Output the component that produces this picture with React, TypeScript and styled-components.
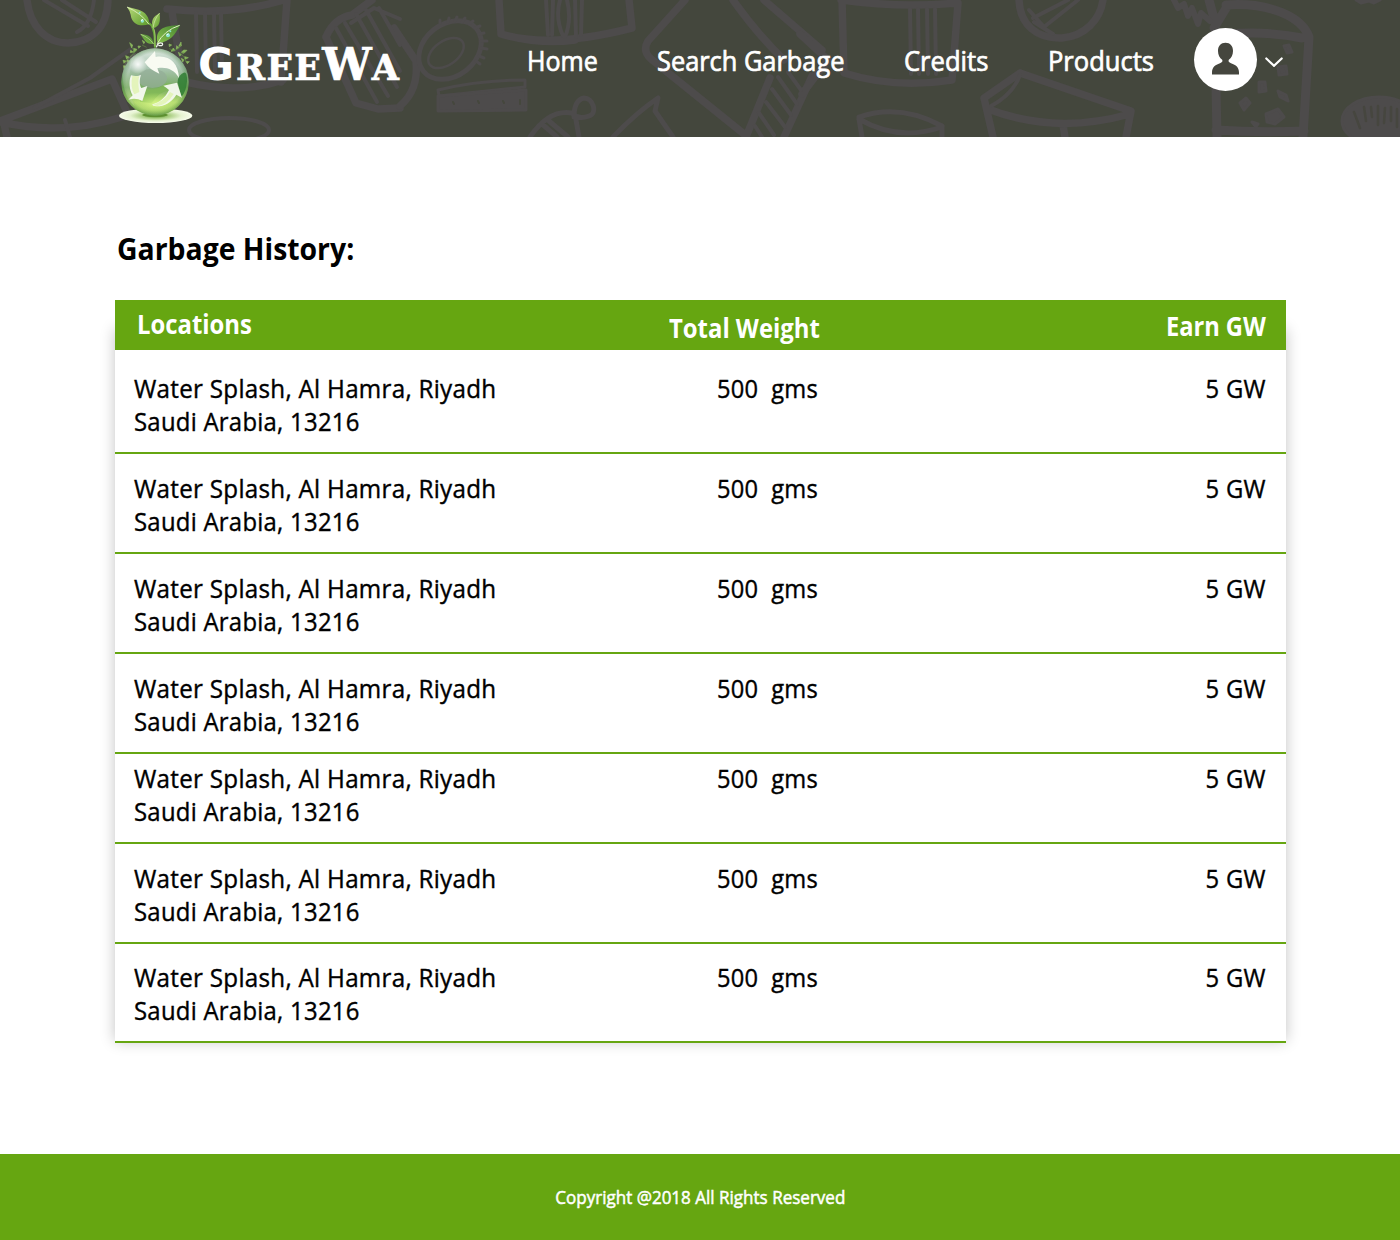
import React from 'react';
import styled, { createGlobalStyle } from 'styled-components';

const GREEN = '#66a611';

const GlobalStyle = createGlobalStyle`
  *, *::before, *::after { box-sizing: border-box; }
  body { margin: 0; background: #fff; color: #000; font-family: 'Open Sans', 'Noto Sans', sans-serif; }
`;

const Page = styled.div`
  width: 1400px;
  height: 1240px;
  display: flex;
  flex-direction: column;
  overflow: hidden;
`;

/* Text set slightly narrower than the family's own width. */
const Label = styled.span<{ $scale: number; $weight?: number; $origin?: string; $stroke?: number }>`
  display: inline-block;
  white-space: pre;
  font-weight: ${p => p.$weight ?? 400};
  transform: scaleX(${p => p.$scale});
  transform-origin: ${p => p.$origin ?? 'left'} center;
  -webkit-text-stroke: ${p => p.$stroke ?? 0}px currentColor;
`;

const Header = styled.header`
  position: relative;
  flex: none;
  height: 137px;
  display: flex;
  align-items: flex-start;
  background: #44473d;
  color: #fff;
`;

const Backdrop = styled.svg`
  position: absolute;
  inset: 0;
`;

const Brand = styled.a`
  position: relative;
  display: flex;
  width: 416.7px;
  margin-left: 110px;
`;

const BrandIcon = styled.svg`
  flex: none;
  width: 100px;
  height: 137px;
`;

const BrandName = styled.span`
  display: flex;
  align-items: baseline;
  height: 60px;
  margin: 39px 0 0 -12px;
  font: 700 44px/52px 'DejaVu Serif', serif;
  -webkit-text-stroke: 0.7px #fff;
`;

const RoundCap = styled.span`
  display: inline-block;
  width: 38px;
  font-family: 'DejaVu Sans', sans-serif;
  -webkit-text-stroke: 0;
`;

const SmallCaps = styled.span`
  font-size: 35px;
  letter-spacing: 1.3px;
`;

const Nav = styled.nav`
  position: relative;
  display: grid;
  grid-template-columns: 130.8px 247px 143.8px 146.2px;
  padding-top: 43px;
  font-size: 26.5px;
  line-height: 36px;
`;

const Account = styled.button`
  position: relative;
  display: flex;
  align-items: center;
  gap: 8px;
  height: 63px;
  margin-top: 28px;
  padding: 0;
  border: 0;
  background: none;
`;

const Avatar = styled.span`
  display: block;
  width: 63px;
  height: 63px;
  border-radius: 50%;
  background: #fff;
`;

const Main = styled.main`
  flex: 1;
  padding: 84px 114px 0 115px;
`;

const Title = styled.h1`
  margin: 0;
  padding: 3px 0 0 1.5px;
  height: 79px;
  font-size: 31px;
  line-height: 48px;
`;

const Table = styled.section`
  position: relative;
  &::before {
    content: '';
    position: absolute;
    inset: 29px 0 2px;
    box-shadow: 0 0 14px rgba(0, 0, 0, 0.24);
  }
`;

const TableHead = styled.div`
  position: relative;
  display: grid;
  grid-template-columns: 532px 1fr auto;
  height: 50px;
  padding: 0 20px 0 21.5px;
  background: ${GREEN};
  color: #fff;
  font-size: 26px;
  line-height: 34px;
`;

const HeadCell = styled.div<{ $top: number }>`
  padding-top: ${p => p.$top}px;
`;

const Row = styled.div<{ $height: number }>`
  position: relative;
  display: grid;
  grid-template-columns: 583px 1fr auto;
  align-content: end;
  height: ${p => p.$height}px;
  padding: 0 20px 14px 19px;
  border-bottom: 2px solid ${GREEN};
  background: #fff;
  font-size: 26px;
  line-height: 33px;
  letter-spacing: 0.3px;
`;

const Address = styled.div`
  display: flex;
  flex-direction: column;
  align-items: flex-start;
`;

const Footer = styled.footer`
  flex: none;
  display: flex;
  justify-content: center;
  height: 86px;
  padding-top: 31px;
  background: ${GREEN};
  color: #fff;
  font-size: 18px;
  line-height: 25px;
`;

const navItems = [
  { text: 'Home', scale: 0.945 },
  { text: 'Search Garbage', scale: 0.957 },
  { text: 'Credits', scale: 0.966 },
  { text: 'Products', scale: 0.964 },
];

const rowHeights = [104, 100, 100, 100, 90, 100, 99];

const vlines = (xs: number[], y1: number, y2: number) =>
  xs.map(x => `M${x},${y1}L${x + 1},${y2}`).join('');

function Doodles() {
  return (
    <Backdrop width="1400" height="137" viewBox="0 0 1400 137" fill="none" stroke="#4d4b4b" strokeLinecap="round" strokeLinejoin="round" aria-hidden>
      <g strokeWidth="7.5">
        <path d="M27,0C30,26 46,43 68,43C92,42 107,28 108,0" />
        <path d="M167,9Q230,16 284,0M172,12L184,84M287,0L281,82M186,82Q240,95 283,80" />
        <path d="M0,121L112,79L126,110M0,122Q62,136 122,117M4,124L7,137" />
        <path d="M326,37Q334,18 352,15M352,15L372,0M326,37L356,103L378,109L400,108" />
        <path d="M394,28L416,61Q419,90 400,106" />
        <path d="M499,0L501,34Q550,49 632,28L629,0M501,34Q540,45 575,40" />
        <path d="M685,0L648,41Q642,51 651,59L744,134M733,0Q758,35 784,60M764,0L822,50M770,78L746,137M812,76L784,137" />
        <path d="M800,34L828,60L802,94M842,0L844,73Q895,89 952,80L958,3Q900,8 841,0" />
        <path d="M1019,0C1020,25 1037,39 1062,38C1085,36 1100,20 1103,0" />
        <path d="M1020,73L1131,111L1126,137M1020,73L984,98L993,137M988,109Q1055,135 1130,114M1063,125L1065,137" />
      </g>
      <g strokeWidth="4">
        <path d="M44,0L88,26M62,0L96,22M94,0Q91,25 77,32M131,49L90,78L34,108M65,120L70,137" />
        <path d={vlines([196, 205, 214, 221], 13, 72)} />
        <ellipse cx="229" cy="130" rx="40" ry="12" />
        <path d="M336,28L377,102M345,23L388,96M356,14L397,87M366,10L400,71M379,8L400,45M351,23L374,8L400,19" />
        <path d="M530,137Q549,109 572,113M542,124L557,137M549,121L568,137M574,117Q574,100 584,98C593,98 598,113 589,116Q578,120 572,113M576,120L579,137M613,137Q636,113 658,98L655,111L673,137" strokeWidth="5" />
        <path d="M788,72L801,90M778,77L797,104M772,89L791,115M766,102L785,127M759,113L774,135M755,126L762,137" />
        <path d={vlines([910, 918, 927, 935], 9, 74)} />
        <path d="M859,117Q900,103 942,126M859,119Q898,142 942,127M859,119L862,137M942,127L942,137" strokeWidth="5" />
        <path d="M1033,18L1068,0M1029,10L1044,27L1078,0M1034,22L1053,34M1020,75Q1013,94 991,106" />
      </g>
      <ellipse cx="450" cy="50" rx="34" ry="26" transform="rotate(-38 450 50)" strokeWidth="5" />
      <ellipse cx="446" cy="53" rx="20" ry="12" transform="rotate(-35 446 53)" strokeWidth="2.5" />
      <path d="M440,23l0,-3M448,22l1,-4M455,21l2,-4M462,22l3,-4M469,24l4,-3M475,28l5,-2M479,34l5,-1M481,41l6,0M481,48l6,1M479,56l5,2M476,61l4,3" strokeWidth="3" />
      <path d="M438,90Q480,80 525,80L525,87L439,96Z" strokeWidth="3" />
      <path d="M438,96L526,90L526,110L438,111Z" fill="#4d4b4b" strokeWidth="3" />
      <path d="M453,102l1,2M478,101l1,2M503,101l1,2M520,100v4" stroke="#45473d" strokeWidth="2" />
      <path d="M546,0L548,35M553,0L552,35M560,0Q555,18 563,36M567,0Q572,20 565,37M575,0L576,37M582,0L581,35" strokeWidth="4" />
      <path d="M1226,5C1270,2 1302,17 1309,37L1303,137M1209,0L1215,22M1228,34Q1268,31 1302,38M1228,5L1214,28M1216,86L1217,137M1216,130Q1260,133 1304,131" strokeWidth="9" />
      <path d="M1174,0L1178,8L1184,4L1188,16L1192,8L1198,24L1201,13L1210,21" strokeWidth="6" />
      <g fill="#4d4b4b" strokeWidth="3">
        <path d="M1284,46l5,-1l3,7l-5,1ZM1278,67l8,-1l1,8l-8,1ZM1259,82l6,0l1,9l-7,1ZM1278,91l8,4l2,6l-8,-4ZM1240,103l6,-5l4,5l-6,7ZM1266,114l12,-5l6,8l-9,7l-8,-2ZM1252,122l6,2l-2,3Z" />
        <ellipse cx="1379" cy="121" rx="37" ry="24" />
        <path d="M1356,0l5,3l8,-2l5,2l6,-3Z" />
      </g>
      <path d="M1354,112L1360,128M1364,107l2,14M1371,107l1,10M1378,106l0,19M1385,108l-1,15M1391,107v14M1397,109v18" stroke="#46463f" strokeWidth="2.5" />
    </Backdrop>
  );
}

/* Drawn on a 3x grid, so one unit is a third of a pixel. */
function LogoMark() {
  return (
    <BrandIcon viewBox="0 0 300 411" aria-hidden>
      <defs>
        <linearGradient id="ball" x1="0" y1="0" x2="0" y2="1">
          <stop offset="0" stopColor="#dde9e0" />
          <stop offset="0.3" stopColor="#a9c4b0" />
          <stop offset="0.58" stopColor="#78ab62" />
          <stop offset="0.8" stopColor="#b4da74" />
          <stop offset="1" stopColor="#8ab860" />
        </linearGradient>
        <radialGradient id="shade" cx="0.5" cy="0.5" r="0.5">
          <stop offset="0.85" stopColor="#2f7026" stopOpacity="0" />
          <stop offset="1" stopColor="#2f7026" stopOpacity="0.4" />
        </radialGradient>
        <radialGradient id="glow">
          <stop offset="0" stopColor="#fff" stopOpacity="0.9" />
          <stop offset="1" stopColor="#fff" stopOpacity="0" />
        </radialGradient>
        <radialGradient id="lime">
          <stop offset="0" stopColor="#dcf88b" stopOpacity="0.9" />
          <stop offset="1" stopColor="#c5ee6a" stopOpacity="0" />
        </radialGradient>
        <radialGradient id="base">
          <stop offset="0" stopColor="#4c8a24" />
          <stop offset="0.35" stopColor="#a5cb7b" />
          <stop offset="0.7" stopColor="#e6f3d1" />
          <stop offset="1" stopColor="#f7fcec" />
        </radialGradient>
        <linearGradient id="leaf" x1="0" y1="0" x2="1" y2="1">
          <stop offset="0" stopColor="#b8d97a" />
          <stop offset="1" stopColor="#5c9b2b" />
        </linearGradient>
        <linearGradient id="darkLeaf" x1="1" y1="0" x2="0" y2="1">
          <stop offset="0" stopColor="#458331" />
          <stop offset="1" stopColor="#8ac24d" />
        </linearGradient>
      </defs>
      <ellipse cx="137" cy="347" rx="110" ry="22" fill="url(#base)" />
      <ellipse cx="135" cy="345" rx="38" ry="6" fill="#5d8f30" />
      <g fill="#8ab65d" stroke="#8ab65d" strokeWidth="2">
        <path d="M59,128l9,7l-3,9ZM71,145l10,3l-10,10ZM62,151l7,5l-8,2ZM47,167l10,4l-7,6ZM39,181l10,2l-7,7ZM52,180l6,2l-5,5ZM97,121l8,6l-4,4ZM84,138l8,1l-6,6ZM213,126l1,12l-8,1ZM190,144l5,8l-12,2ZM221,150l10,1l-9,9l-8,-3ZM205,157l9,7l-5,4ZM224,170l11,3l-10,5ZM228,184l10,1l-6,6ZM214,175l8,5l-4,6ZM177,132l8,3l-7,5ZM200,137l6,6l-7,4ZM40,197l8,1l-6,8Z" />
      </g>
      <path d="M48,183L55,175L73,157L82,150M67,143L73,154M96,135L110,142M178,146L192,152L207,145L212,135M207,157L221,169L229,186M215,160L223,158" fill="none" stroke="#628c43" strokeWidth="2" />
      <circle cx="135" cy="246" r="101" fill="url(#ball)" />
      <circle cx="135" cy="246" r="101" fill="url(#shade)" />
      <path d="M38,220Q42,172 78,158Q55,205 60,240Q55,280 75,320Q38,290 38,220Z" fill="#fff" opacity="0.14" />
      <path d="M203,247C203,229 214,221 221,218Q232,214 231,245Q229,274 214,291Z" fill="#2f7c32" opacity="0.85" />
      <ellipse cx="127" cy="235" rx="44" ry="29" fill="#94ad98" opacity="0.75" />
      <path d="M87,265Q130,280 170,250Q195,250 190,265Q146,275 125,310L90,305Z" fill="#80b855" opacity="0.8" />
      <ellipse cx="136" cy="312" rx="74" ry="34" fill="url(#lime)" />
      <circle cx="84" cy="193" r="29" fill="url(#glow)" />
      <g fill="#f8fbf2">
        <path d="M104,187L135,153L137,171C178,164 205,190 207,234C192,208 168,200 142,205L148,221Q118,209 104,187Z" />
        <path d="M63,226C77,230 87,227 93,225C87,242 89,257 94,264L112,258L97,303Q78,292 55,299L68,286C57,269 56,244 63,226Z" opacity="0.95" />
        <path d="M160,257L201,248L216,293L199,284C185,307 164,319 140,319C130,318 127,317 127,313C148,308 165,294 177,270Q169,262 160,257Z" opacity="0.93" />
      </g>
      <path d="M67,228Q60,262 73,283L88,276Q82,246 88,229ZM127,315Q165,302 180,276L191,282Q171,315 142,318Z" fill="#dcf3a2" opacity="0.65" />
      <path d="M135,143C132,119 139,104 125,77L117,69" fill="none" stroke="#69a83a" strokeWidth="6" />
      <path d="M135,139C134,113 138,101 130,83" fill="none" stroke="#bce080" strokeWidth="2" />
      <path d="M51,21C82,27 118,32 118,73C85,82 65,70 62,44Q59,31 51,21Z" fill="url(#leaf)" />
      <path d="M51,21Q94,40 117,73" fill="none" stroke="#e5f3c4" strokeWidth="2.5" />
      <path d="M149,39C151,66 150,79 129,85C121,61 130,50 149,39Z" fill="url(#leaf)" />
      <path d="M149,39Q134,54 129,83" fill="none" stroke="#d7edac" strokeWidth="2" />
      <path d="M211,75C193,105 184,124 143,130C134,89 157,77 211,75Z" fill="url(#darkLeaf)" />
      <path d="M209,76Q162,91 141,132" fill="none" stroke="#e0f0c2" strokeWidth="3" />
      <path d="M91,102C112,105 126,105 131,132C107,134 103,119 91,102Z" fill="url(#darkLeaf)" />
      <path d="M92,103Q118,113 131,132" fill="none" stroke="#c8df9b" strokeWidth="2" />
      <path d="M139,142Q144,125 157,130Q161,140 145,136" fill="none" stroke="#f1f7ed" strokeWidth="4" />
      <g fill="#8de5d2">
        <circle cx="97" cy="63" r="5" />
        <circle cx="89" cy="38" r="3" />
        <circle cx="174" cy="106" r="6" />
        <circle cx="181" cy="94" r="3" />
      </g>
      <path d="M94,61l4,-2M171,104l4,-2" stroke="#fff" strokeWidth="3" strokeLinecap="round" />
    </BrandIcon>
  );
}

export default function App() {
  return (
    <Page>
      <GlobalStyle />
      <Header>
        <Doodles />
        <Brand>
          <LogoMark />
          <BrandName>
            <RoundCap>G</RoundCap><SmallCaps>REE</SmallCaps>W<SmallCaps>A</SmallCaps>
          </BrandName>
        </Brand>
        <Nav>
          {navItems.map(item => (
            <Label key={item.text} $scale={item.scale} $stroke={0.7}>{item.text}</Label>
          ))}
        </Nav>
        <Account aria-label="Account">
          <Avatar>
            <svg width="63" height="63" viewBox="0 0 63 63" aria-hidden>
              <path d="M31.5,14.8C36.1,14.8 39,18 39,23C39,27 37.3,30.2 34.8,31.8C34,33.6 35,34.5 37,35.2C42,36.8 45,39.5 45,44.5V46.4H18V44.5C18,39.5 21,36.8 26,35.2C28,34.5 29,33.6 28.2,31.8C25.7,30.2 24,27 24,23C24,18 26.9,14.8 31.5,14.8Z" fill="#45463e" />
            </svg>
          </Avatar>
          <svg width="20" height="14" viewBox="0 0 20 14" fill="none" stroke="#fff" strokeWidth="2.2" strokeLinecap="round" aria-hidden>
            <path d="M1.3,5.5L9,12.8L16.7,5.5" />
          </svg>
        </Account>
      </Header>
      <Main>
        <Title><Label $scale={0.915} $weight={700}>Garbage History:</Label></Title>
        <Table>
          <TableHead>
            <HeadCell $top={7}><Label $scale={0.918} $weight={700}>Locations</Label></HeadCell>
            <HeadCell $top={11}><Label $scale={0.918} $weight={700}>Total Weight</Label></HeadCell>
            <HeadCell $top={9}><Label $scale={0.91} $weight={700} $origin="right">Earn GW</Label></HeadCell>
          </TableHead>
          {rowHeights.map((height, i) => (
            <Row key={i} $height={height}>
              <Address>
                <Label $scale={0.93} $stroke={0.4}>Water Splash, Al Hamra, Riyadh</Label>
                <Label $scale={0.918} $stroke={0.4}>Saudi Arabia, 13216</Label>
              </Address>
              <div><Label $scale={0.91} $stroke={0.4}>500  gms</Label></div>
              <div><Label $scale={0.915} $stroke={0.4} $origin="right">5 GW</Label></div>
            </Row>
          ))}
        </Table>
      </Main>
      <Footer>
        <Label $scale={0.946} $origin="center" $stroke={0.5}>Copyright @2018 All Rights Reserved</Label>
      </Footer>
    </Page>
  );
}
